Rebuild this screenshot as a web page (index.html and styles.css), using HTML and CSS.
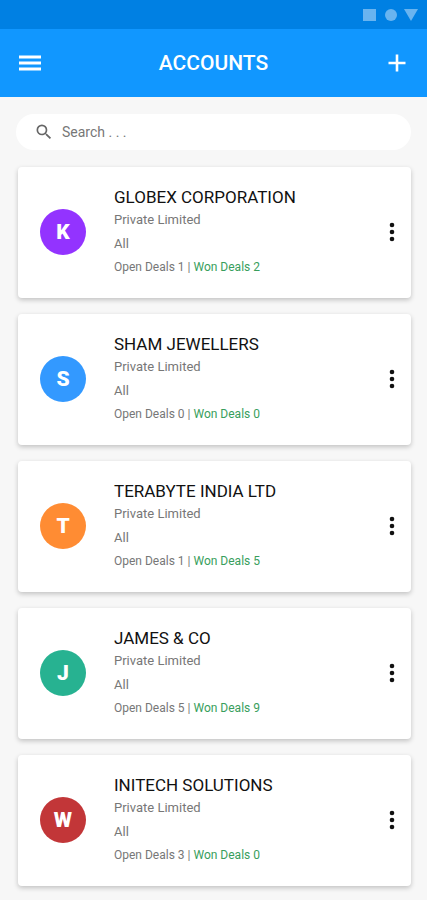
FILE: index.html
```html
<!DOCTYPE html>
<html lang="en">
<head>
    <meta charset="UTF-8">
    <meta name="viewport" content="width=device-width, initial-scale=1.0">
    <title>Accounts</title>
    <link rel="stylesheet" href="styles.css">
</head>
<body>
    <div class="status-bar">
        <svg width="56" height="14" viewBox="0 0 56 14" fill="currentColor" aria-hidden="true">
            <rect x="0" y="1" width="13" height="12"/>
            <circle cx="28" cy="7" r="6"/>
            <path d="M41 1h14l-7 12z"/>
        </svg>
    </div>

    <header class="app-bar">
        <button class="icon-button" type="button" aria-label="Menu">
            <svg width="22" height="16" viewBox="0 0 22 16" fill="currentColor" aria-hidden="true">
                <path d="M0 .5h22v3H0zM0 6.5h22v3H0zM0 12.5h22v3H0z"/>
            </svg>
        </button>
        <h1>ACCOUNTS</h1>
        <button class="icon-button" type="button" aria-label="Add account">
            <svg width="18" height="18" viewBox="0 0 18 18" fill="currentColor" aria-hidden="true">
                <path d="M7.7 .5h2.6v7.2h7.2v2.6h-7.2v7.2H7.7v-7.2H.5V7.7h7.2z"/>
            </svg>
        </button>
    </header>

    <main class="content">
        <label class="search">
            <svg width="20" height="20" viewBox="0 0 24 24" fill="currentColor" aria-hidden="true">
                <path d="M15.5 14h-.79l-.28-.27A6.47 6.47 0 0 0 16 9.5 6.5 6.5 0 1 0 9.5 16c1.61 0 3.09-.59 4.23-1.57l.27.28v.79l5 4.99L20.49 19l-4.99-5zm-6 0C7.01 14 5 11.99 5 9.5S7.01 5 9.5 5 14 7.01 14 9.5 11.99 14 9.5 14z"/>
            </svg>
            <input type="text" placeholder="Search . . ." aria-label="Search accounts">
        </label>

        <div class="accounts">
            <article class="card">
                <div class="avatar purple">K</div>
                <div class="details">
                    <h2>GLOBEX CORPORATION</h2>
                    <p class="type">Private Limited</p>
                    <p class="group">All</p>
                    <p class="deals">Open Deals 1 | <span class="won">Won Deals 2</span></p>
                </div>
                <button class="more" type="button" aria-label="More options">
                    <svg width="6" height="20" viewBox="0 0 6 20" fill="currentColor" aria-hidden="true"><circle cx="3" cy="3" r="2.3"/><circle cx="3" cy="10" r="2.3"/><circle cx="3" cy="17" r="2.3"/></svg>
                </button>
            </article>

            <article class="card">
                <div class="avatar blue">S</div>
                <div class="details">
                    <h2>SHAM JEWELLERS</h2>
                    <p class="type">Private Limited</p>
                    <p class="group">All</p>
                    <p class="deals">Open Deals 0 | <span class="won">Won Deals 0</span></p>
                </div>
                <button class="more" type="button" aria-label="More options">
                    <svg width="6" height="20" viewBox="0 0 6 20" fill="currentColor" aria-hidden="true"><circle cx="3" cy="3" r="2.3"/><circle cx="3" cy="10" r="2.3"/><circle cx="3" cy="17" r="2.3"/></svg>
                </button>
            </article>

            <article class="card">
                <div class="avatar orange">T</div>
                <div class="details">
                    <h2>TERABYTE INDIA LTD</h2>
                    <p class="type">Private Limited</p>
                    <p class="group">All</p>
                    <p class="deals">Open Deals 1 | <span class="won">Won Deals 5</span></p>
                </div>
                <button class="more" type="button" aria-label="More options">
                    <svg width="6" height="20" viewBox="0 0 6 20" fill="currentColor" aria-hidden="true"><circle cx="3" cy="3" r="2.3"/><circle cx="3" cy="10" r="2.3"/><circle cx="3" cy="17" r="2.3"/></svg>
                </button>
            </article>

            <article class="card">
                <div class="avatar green">J</div>
                <div class="details">
                    <h2>JAMES &amp; CO</h2>
                    <p class="type">Private Limited</p>
                    <p class="group">All</p>
                    <p class="deals">Open Deals 5 | <span class="won">Won Deals 9</span></p>
                </div>
                <button class="more" type="button" aria-label="More options">
                    <svg width="6" height="20" viewBox="0 0 6 20" fill="currentColor" aria-hidden="true"><circle cx="3" cy="3" r="2.3"/><circle cx="3" cy="10" r="2.3"/><circle cx="3" cy="17" r="2.3"/></svg>
                </button>
            </article>

            <article class="card">
                <div class="avatar red">W</div>
                <div class="details">
                    <h2>INITECH SOLUTIONS</h2>
                    <p class="type">Private Limited</p>
                    <p class="group">All</p>
                    <p class="deals">Open Deals 3 | <span class="won">Won Deals 0</span></p>
                </div>
                <button class="more" type="button" aria-label="More options">
                    <svg width="6" height="20" viewBox="0 0 6 20" fill="currentColor" aria-hidden="true"><circle cx="3" cy="3" r="2.3"/><circle cx="3" cy="10" r="2.3"/><circle cx="3" cy="17" r="2.3"/></svg>
                </button>
            </article>
        </div>
    </main>
</body>
</html>
```
FILE: styles.css
```css
* {
    box-sizing: border-box;
}
body {
    margin: 0;
    font-family: Roboto, sans-serif;
    background-color: #f7f7f7;
    color: #111;
}
h1, h2, p {
    margin: 0;
}
button {
    padding: 0;
    border: none;
    background: none;
    color: inherit;
    cursor: pointer;
}
svg {
    display: block;
}

/* Top bars */
.status-bar {
    display: flex;
    justify-content: flex-end;
    align-items: center;
    height: 29px;
    padding: 0 8px;
    background-color: #0080e3;
    color: #69b4f0;
}
.app-bar {
    display: flex;
    justify-content: space-between;
    align-items: center;
    height: 68px;
    padding: 0 16px;
    background-color: #1197ff;
    color: white;
}
.app-bar h1 {
    font-size: 21px;
    font-weight: 500;
    line-height: 24px;
}
.icon-button {
    display: flex;
    justify-content: center;
    align-items: center;
    width: 28px;
    height: 28px;
}

/* Search */
.content {
    padding: 17px 16px 14px;
}
.search {
    display: flex;
    align-items: center;
    gap: 8px;
    height: 36px;
    padding: 0 18px;
    border-radius: 18px;
    background-color: white;
    color: #666;
}
.search input {
    flex: 1;
    min-width: 0;
    padding: 0;
    border: none;
    outline: none;
    background: none;
    font-family: inherit;
    font-size: 14px;
    color: #444;
}
.search input::placeholder {
    color: #777;
}

/* Account cards */
.accounts {
    display: grid;
    gap: 16px;
    margin: 17px 0 0 2px;
}
.card {
    display: flex;
    align-items: center;
    gap: 28px;
    padding: 19px 10px 20px 22px;
    border-radius: 4px;
    background-color: white;
    box-shadow: 0 2px 5px rgba(0,0,0,0.22);
}
.avatar {
    display: flex;
    justify-content: center;
    align-items: center;
    width: 46px;
    height: 46px;
    border-radius: 50%;
    color: white;
    font-size: 21px;
    font-weight: 900;
}
.purple { background-color: #9333ff; }
.blue { background-color: #3399ff; }
.orange { background-color: #ff8c33; }
.green { background-color: #27b291; }
.red { background-color: #c23638; }
.details {
    flex: 1;
    color: #777;
}
.details h2 {
    font-size: 17px;
    font-weight: 400;
    line-height: 22px;
    color: #111;
}
.type, .group {
    font-size: 13px;
    line-height: 24px;
}
.deals {
    font-size: 12px;
    line-height: 22px;
}
.won {
    color: #389e5c;
}
.more {
    display: flex;
    justify-content: center;
    align-items: center;
    width: 18px;
    height: 32px;
}
```
